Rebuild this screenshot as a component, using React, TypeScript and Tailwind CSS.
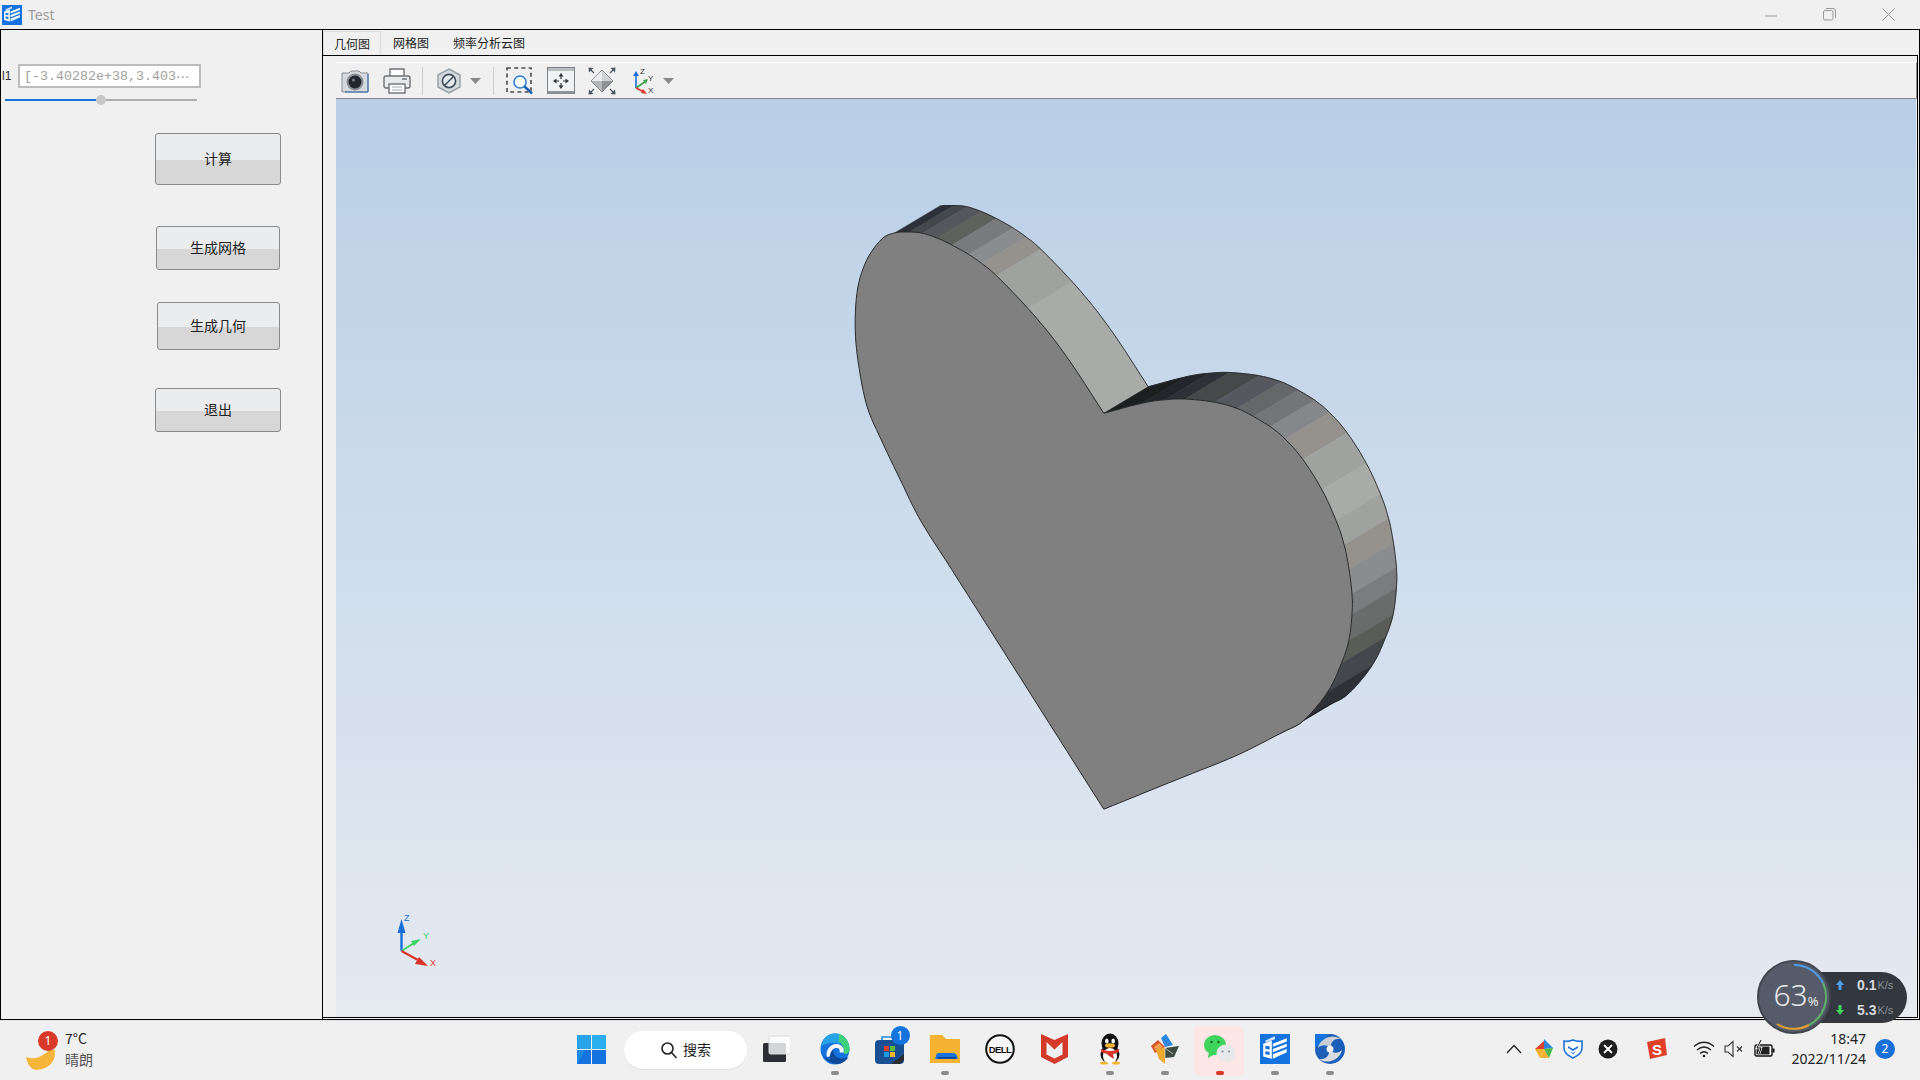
import React from "react";

type P = [number, number];

// heart outline, read off the reference (zoomed crop coords, mapped to page coords below)
const toPage = (p: P): P => [830 + p[0] / 2.703, 190 + p[1] / 2.45];
const OFFSET: P = [44.4, -26.5];

const LEFT_LOBE: P[] = [
  [740, 1517], [616, 1340], [469, 1130], [329, 930], [245, 810], [190, 710], [140, 615], [100, 530],
  [76, 420], [68, 330], [75, 240], [100, 170], [140, 120], [175, 105], [215, 103], [250, 106], [290, 118],
  [330, 135], [375, 158], [410, 180], [450, 210], [535, 290], [600, 360], [660, 435], [740, 547],
];
const LEFT_COLORS: Record<number, string> = {
  13: "#2c3038", 14: "#44484c", 15: "#55575c", 16: "#5f615d", 17: "#787a7c", 18: "#8a8c8e",
  19: "#95928e", 20: "#a0a2a0", 21: "#a9aba9", 22: "#a9aba9", 23: "#a9aba9",
};
const RIGHT_LOBE: P[] = [
  [740, 547], [845, 522], [905, 514], [960, 512], [1040, 520], [1100, 535], [1145, 555], [1190, 580],
  [1230, 610], [1278, 660], [1330, 735], [1368, 810], [1390, 870], [1403, 930], [1411, 990], [1411, 1040],
  [1402, 1105], [1382, 1160], [1345, 1230], [1280, 1300], [1220, 1330], [1100, 1385], [950, 1440], [740, 1517],
];
const RIGHT_COLORS = [
  "#1c1f20", "#22262a", "#2e3138", "#45494a", "#565860", "#666768", "#737577", "#85878a", "#95928e", "#a0a2a0",
  "#a9aba9", "#a0a2a0", "#95928e", "#8a8c8e", "#7a7c7e", "#6a6c6c", "#5a5c58", "#44484c", "#2e3138", "#1c1f20",
];

// catmull-rom, one list of samples per key segment
const sampleSegments = (keys: P[], n = 6): P[][] => {
  const pts = keys.map(toPage);
  const segs: P[][] = [];
  for (let i = 0; i < pts.length - 1; i++) {
    const a = pts[Math.max(i - 1, 0)];
    const b = pts[i];
    const c = pts[i + 1];
    const d = pts[Math.min(i + 2, pts.length - 1)];
    const seg: P[] = [];
    for (let k = 0; k <= n; k++) {
      const t = k / n;
      const f = (j: 0 | 1) =>
        0.5 *
        (2 * b[j] +
          (c[j] - a[j]) * t +
          (2 * a[j] - 5 * b[j] + 4 * c[j] - d[j]) * t * t +
          (3 * b[j] - a[j] - 3 * c[j] + d[j]) * t * t * t);
      seg.push([f(0), f(1)]);
    }
    segs.push(seg);
  }
  return segs;
};

const str = (pts: P[]) => pts.map((p) => `${p[0].toFixed(1)},${p[1].toFixed(1)}`).join(" ");
const shift = (pts: P[]): P[] => pts.map((p) => [p[0] + OFFSET[0], p[1] + OFFSET[1]]);

const leftSegs = sampleSegments(LEFT_LOBE);
const rightSegs = sampleSegments(RIGHT_LOBE);

const Scene: React.FC = () => {
  const strips: { pts: P[]; color: string }[] = [];
  leftSegs.forEach((s, i) => {
    if (LEFT_COLORS[i]) strips.push({ pts: s, color: LEFT_COLORS[i] });
  });
  rightSegs.forEach((s, i) => {
    if (RIGHT_COLORS[i]) strips.push({ pts: s, color: RIGHT_COLORS[i] });
  });
  const face = [...leftSegs.flat(), ...rightSegs.flat()];
  const backLeft = leftSegs.slice(13).flat();
  const backRight = rightSegs.slice(0, 20).flat();

  return (
    <svg className="block w-full h-full" viewBox="336 99 1580 918">
      {strips.map((s, i) => (
        <polygon
          key={i}
          points={str([...s.pts, ...shift(s.pts).reverse()])}
          fill={s.color}
          stroke={s.color}
          strokeWidth="0.6"
        />
      ))}
      <polyline points={str(shift(backLeft))} fill="none" stroke="#26282a" strokeWidth="0.9" />
      <polyline points={str(shift(backRight))} fill="none" stroke="#26282a" strokeWidth="0.9" />
      <polygon points={str(face)} fill="#808080" stroke="#26282a" strokeWidth="1" />

      {/* axis triad */}
      <line x1="401.5" y1="951" x2="401.5" y2="925" stroke="#1a6fd8" strokeWidth="2.4" />
      <polygon points="401.5,919 405.5,933 397.5,933" fill="#1a6fd8" />
      <line x1="401.5" y1="951" x2="414" y2="943" stroke="#3ed46a" strokeWidth="2" />
      <polygon points="421,939 414,946 411,941" fill="#3ed46a" />
      <line x1="401.5" y1="951" x2="418" y2="960" stroke="#d9352a" strokeWidth="2" />
      <polygon points="428,966 415,964 419,957" fill="#d9352a" />
      <text x="404" y="921" fontSize="9" fill="#1a6fd8" fontFamily="Liberation Sans, sans-serif">Z</text>
      <text x="423" y="939" fontSize="9" fill="#3ed46a" fontFamily="Liberation Sans, sans-serif">Y</text>
      <text x="430" y="966" fontSize="9" fill="#d9352a" fontFamily="Liberation Sans, sans-serif">X</text>
    </svg>
  );
};

const AppLogo: React.FC<{ size: number }> = ({ size }) => (
  <svg width={size} height={size} viewBox="0 0 28 28">
    <rect width="28" height="28" fill="#1473de" />
    <path d="M3 9l8-3v17l-8-2zM5 11v3l4 .5v-3zM5 16v3l4 .5v-3z" fill="#fff" fillRule="evenodd" />
    <path d="M5 6l9-4v3l-9 3z" fill="#cfe2f8" />
    <path d="M12 9l13-5v3l-13 5zM12 14l13-5v3l-13 5zM12 19l13-5v3l-13 6z" fill="#fff" />
  </svg>
);

const Caret: React.FC = () => (
  <svg width="11" height="6" viewBox="0 0 11 6">
    <polygon points="0,0 11,0 5.5,6" fill="#8a8a8a" />
  </svg>
);

const CameraIcon = () => (
  <svg width="28" height="28" viewBox="0 0 28 28">
    <path d="M1 6h7l2-2h8l2 2h7v19H1z" fill="#d5d8dc" stroke="#8b8f94" />
    <path d="M27 7v18H4" fill="none" stroke="#2a66ad" strokeWidth="1" />
    <circle cx="14" cy="15" r="8.5" fill="#8c9096" />
    <circle cx="14" cy="15" r="6.5" fill="#23262c" />
    <circle cx="12.5" cy="13" r="1.6" fill="#6f7a88" />
  </svg>
);

const PrinterIcon = () => (
  <svg width="28" height="28" viewBox="0 0 28 28">
    <path d="M7 9V2h14v7" fill="#fff" stroke="#6d7074" strokeWidth="1.4" />
    <rect x="1" y="9" width="26" height="12" rx="2" fill="#e9eaec" stroke="#6d7074" strokeWidth="1.4" />
    <rect x="19" y="11" width="5" height="2" fill="#8f9296" />
    <rect x="6" y="17" width="16" height="9" fill="#fff" stroke="#6d7074" strokeWidth="1.4" />
    <path d="M9 20h10M9 23h10" stroke="#a3a6aa" strokeWidth="1.2" />
  </svg>
);

const HexIcon = () => (
  <svg width="24" height="26" viewBox="0 0 24 26">
    <polygon points="12,1 23,7 23,19 12,25 1,19 1,7" fill="#d4d9dc" stroke="#98a3aa" strokeWidth="1.5" />
    <circle cx="12" cy="13" r="6.6" fill="#e7eaec" stroke="#3f4f5e" strokeWidth="1.6" />
    <line x1="7.5" y1="17.5" x2="16.5" y2="8.5" stroke="#3f4f5e" strokeWidth="1.6" />
  </svg>
);

const ZoomBoxIcon = () => (
  <svg width="28" height="28" viewBox="0 0 28 28">
    <rect x="1" y="1" width="24" height="24" fill="none" stroke="#4a4d52" strokeWidth="1.6" strokeDasharray="4 3.2" />
    <circle cx="14" cy="15" r="6" fill="#fff" stroke="#2b7fd6" strokeWidth="1.6" />
    <line x1="18.5" y1="19.5" x2="26" y2="26.5" stroke="#1b5fae" strokeWidth="2.4" />
  </svg>
);

const FitIcon = () => (
  <svg width="28" height="28" viewBox="0 0 28 28">
    <rect x="0.5" y="0.5" width="27" height="26" fill="#f1f2f3" stroke="#7d8186" />
    <rect x="1" y="1" width="26" height="3" fill="#b9bec4" />
    <rect x="1" y="24" width="26" height="2.500" fill="#8f9499" />
    <path d="M14 9v3M14 16v3M9 14h3M16 14h3" stroke="#33373c" strokeWidth="1.2" />
    <path d="M14 6l2.500 3.500h-5zM14 22l2.500-3.500h-5zM6 14l3.500-2.500v5zM22 14l-3.500-2.500v5z" fill="#33373c" />
  </svg>
);

const DiamondIcon = () => (
  <svg width="28" height="28" viewBox="0 0 28 28">
    <polygon points="14,3 25,14 14,14" fill="#d2d3d4" />
    <polygon points="14,3 3,14 14,14" fill="#ececec" />
    <polygon points="3,14 14,14 14,25" fill="#b4b6b8" />
    <polygon points="14,14 25,14 14,25" fill="#8f9294" />
    <polygon points="14,3 25,14 14,25 3,14" fill="none" stroke="#77797c" strokeWidth="0.8" />
    <path d="M0.500 0.500l5 .5-4.500 4.500zM27.500 0.500l-5 .5 4.500 4.500zM0.500 27.500l5-.5-4.500-4.500zM27.500 27.500l-5-.5 4.500-4.500z" fill="#4a5560" />
    <path d="M3 3l3 3M25 3l-3 3M3 25l3-3M25 25l-3-3" stroke="#4a5560" strokeWidth="1.2" />
  </svg>
);

const AxesIcon = () => (
  <svg width="26" height="28" viewBox="0 0 26 28">
    <line x1="5" y1="21" x2="5" y2="7" stroke="#1a6fd8" strokeWidth="1.6" />
    <polygon points="5,4 8,9 2,9" fill="#1a6fd8" />
    <line x1="5" y1="21" x2="15" y2="14" stroke="#3fa34d" strokeWidth="1.6" />
    <polygon points="17,12 15,17 12,13" fill="#3fa34d" />
    <line x1="5" y1="21" x2="13" y2="25" stroke="#d9352a" strokeWidth="1.6" />
    <polygon points="16,27 10,26 12,22" fill="#d9352a" />
    <text x="9" y="7" fontSize="8" fill="#333" fontFamily="Liberation Sans, sans-serif">Z</text>
    <text x="17" y="14" fontSize="8" fill="#333" fontFamily="Liberation Sans, sans-serif">Y</text>
    <text x="17" y="26" fontSize="8" fill="#333" fontFamily="Liberation Sans, sans-serif">X</text>
  </svg>
);

const WinIcon = () => (
  <svg width="29" height="29" viewBox="0 0 29 29">
    <rect x="0" y="0" width="14" height="14" fill="#29a3ea" />
    <rect x="15" y="0" width="14" height="14" fill="#2aaeef" />
    <polygon points="0,15 14,15 14,29 0,29" fill="#1d8ce0" />
    <polygon points="0,29 8,15 14,15 14,29" fill="#1473de" />
    <rect x="15" y="15" width="14" height="14" fill="#1473de" />
  </svg>
);

const TaskViewIcon = () => (
  <svg width="30" height="30" viewBox="0 0 30 30">
    <rect x="2" y="9" width="23" height="19" rx="1.5" fill="#2c2e33" />
    <rect x="8" y="2" width="22" height="18" rx="1.5" fill="#fff" fillOpacity="0.8" stroke="#dcdcdc" />
  </svg>
);

const EdgeIcon = () => (
  <svg width="30" height="32" viewBox="0 0 30 32">
    <ellipse cx="15" cy="16" rx="14.5" ry="15.5" fill="#1473de" />
    <path d="M1 13C3 5 8 .5 15 .5c3 0 5 .7 7 2l-2 9c-5-3-12-2-19 1.500z" fill="#28a2e6" />
    <path d="M19 1c6 1.500 10.500 8 10.500 15 0 3-1.500 5-5 5l-1-1c1-5-1-9-5-11.500z" fill="#3fd07a" />
    <path d="M7 24c-2-6 3-13 9-13 6 0 9 5 7.500 8.500h-4c1-3-1-5-4-4.500-4 1-5 5-4 8z" fill="#f4f6f8" />
    <path d="M4 24c3 4 8 7 13 7 5 0 9-3 11.500-7-3 1.500-7 2-10.500.5-2.500-1-5-4-5-8-2 2-4 6-3 10z" fill="#0f4a9a" />
  </svg>
);

const StoreIcon = () => (
  <svg width="30" height="30" viewBox="0 0 30 30">
    <path d="M7 7V3h12v4" fill="none" stroke="#2a8bdf" strokeWidth="1.6" />
    <rect x="0" y="6" width="29" height="24" rx="4" fill="#174f90" />
    <polygon points="29,20 29,26 25,30 16,30" fill="#2b2d33" />
    <rect x="9" y="12" width="5" height="5" fill="#e5432f" />
    <rect x="15" y="12" width="5" height="5" fill="#5ebd3e" />
    <rect x="9" y="18" width="5" height="5" fill="#1a9be0" />
    <rect x="15" y="18" width="5" height="5" fill="#f6b52b" />
  </svg>
);

const FolderIcon = () => (
  <svg width="30" height="28" viewBox="0 0 30 28">
    <path d="M0 0h12l4 4h14v24H0z" fill="#f6b331" />
    <path d="M6 21q0-3 3-3h14q3 0 4 3l1 3H5z" fill="#1473de" />
    <rect x="8" y="22" width="18" height="1.6" fill="#0f3f8f" />
  </svg>
);

const DellIcon = () => (
  <svg width="30" height="30" viewBox="0 0 30 30">
    <circle cx="15" cy="15" r="13.8" fill="#f7f7f7" stroke="#111" strokeWidth="2" />
    <text
      x="15"
      y="18.5"
      textAnchor="middle"
      fontSize="9.5"
      fontWeight="700"
      fill="#111"
      letterSpacing="-0.6"
      fontFamily="Liberation Sans, sans-serif"
    >
      DELL
    </text>
  </svg>
);

const McAfeeIcon = () => (
  <svg width="27" height="30" viewBox="0 0 27 30">
    <path
      d="M0 0l13.5 6L27 0v23l-13.5 7L0 23zM5.5 8v12.5l8 4 8-4V8l-8 7.5z"
      fill="#d43a2a"
      fillRule="evenodd"
    />
  </svg>
);

const QQIcon = () => (
  <svg width="26" height="32" viewBox="0 0 26 32">
    <ellipse cx="13" cy="10.5" rx="8.5" ry="10" fill="#111" />
    <ellipse cx="13" cy="21" rx="9.5" ry="9.5" fill="#111" />
    <ellipse cx="13" cy="23" rx="7" ry="8" fill="#fff" />
    <ellipse cx="9.8" cy="8" rx="1.8" ry="2.6" fill="#fff" />
    <ellipse cx="16.2" cy="8" rx="1.8" ry="2.6" fill="#fff" />
    <ellipse cx="13" cy="12.5" rx="5" ry="2.2" fill="#f6b331" />
    <path d="M4 16q9 4 18 0v3q-4 2-6 2l1 5-5-3-2-2q-4-1-6-2z" fill="#d9352a" />
    <ellipse cx="7" cy="30" rx="4" ry="1.6" fill="#f6b331" />
    <ellipse cx="19" cy="30" rx="4" ry="1.6" fill="#f6b331" />
  </svg>
);

const PinIcon = () => (
  <svg width="30" height="30" viewBox="0 0 30 30">
    <polygon points="11,4 16,0 23,11 15,13" fill="#2b86dc" />
    <polygon points="1,12 8,6 15,13 5,19" fill="#d9522a" />
    <polygon points="4,13 9,9 13,13 6,17" fill="#f0a04a" />
    <polygon points="6,15 15,14 15,30 9,25" fill="#f0a92c" />
    <polygon points="15,14 29,12 24,23 15,24" fill="#3d4a40" />
    <path d="M15 13v11M15 14l8 6" stroke="#cfd6cf" strokeWidth="0.8" />
  </svg>
);

const WeChatIcon = () => (
  <svg width="32" height="30" viewBox="0 0 32 30">
    <ellipse cx="11" cy="11" rx="11" ry="10" fill="#3ed45e" />
    <polygon points="5,18 4,24 11,20" fill="#3ed45e" />
    <circle cx="7.5" cy="8" r="1.2" fill="#14691f" />
    <circle cx="14.5" cy="8" r="1.2" fill="#14691f" />
    <ellipse cx="22" cy="19" rx="9.5" ry="8.5" fill="#e6e8ea" />
    <polygon points="25,25 28,29 20,27" fill="#e6e8ea" />
    <circle cx="18.5" cy="17.5" r="1.1" fill="#8b8f93" />
    <circle cx="25" cy="17.5" r="1.1" fill="#8b8f93" />
  </svg>
);

const SwirlIcon = () => (
  <svg width="30" height="30" viewBox="0 0 30 30">
    <circle cx="15" cy="15" r="15" fill="#1d5fb8" />
    <rect x="0" y="0" width="12" height="12" fill="#1473de" />
    <path d="M3 14C5 4 18 -1 26 5c-6-1-11 3-10 9-5-4-10-3-13 0z" fill="#c9ced4" />
    <path d="M27 16c-2 10-15 15-23 9 6 1 11-3 10-9 5 4 10 3 13 0z" fill="#d7dade" />
    <circle cx="15" cy="15" r="3.5" fill="#eef0f2" />
  </svg>
);

const TrayPinwheel = () => (
  <svg width="20" height="20" viewBox="0 0 20 20">
    <polygon points="10,0 19,9 10,10" fill="#2b86dc" />
    <polygon points="10,10 19,9 15,19" fill="#4cb84c" />
    <polygon points="10,10 15,19 6,19" fill="#f6b331" />
    <polygon points="10,10 6,19 1,10" fill="#f6b331" />
    <polygon points="1,10 10,2 10,10" fill="#d9422a" />
  </svg>
);

const TrayShield = () => (
  <svg width="20" height="20" viewBox="0 0 20 20">
    <path d="M10 1q5 2 9 1v7q0 6-9 10Q1 15 1 9V2q4 1 9-1z" fill="#fff" stroke="#1d73dc" strokeWidth="1.6" />
    <path d="M5 7l5 3 5-3v2l-5 3-5-3zM7 12l3 2 3-2-3 3.5z" fill="#1d73dc" />
  </svg>
);

const TrayClose = () => (
  <svg width="20" height="20" viewBox="0 0 20 20">
    <circle cx="10" cy="10" r="9.5" fill="#1e1e1e" />
    <path d="M6.6 6.6l6.8 6.8M13.4 6.6l-6.8 6.8" stroke="#fff" strokeWidth="2" strokeLinecap="round" />
  </svg>
);

const TraySogou = () => (
  <svg width="22" height="22" viewBox="0 0 22 22">
    <polygon points="1,4 19,0 21,17 4,21" fill="#e0402a" />
    <text
      x="11"
      y="16.5"
      textAnchor="middle"
      fontSize="15"
      fontWeight="700"
      fill="#fff"
      fontFamily="Liberation Sans, sans-serif"
    >
      S
    </text>
  </svg>
);

const TrayWifi = () => (
  <svg width="22" height="18" viewBox="0 0 22 18" fill="none" stroke="#222" strokeWidth="1.3">
    <path d="M1 6.5q10-8.5 20 0M4 10q7-6 14 0M7 13.5q4-3.5 8 0" />
    <circle cx="11" cy="16" r="1.3" fill="#222" stroke="none" />
  </svg>
);

const TrayMute = () => (
  <svg width="20" height="18" viewBox="0 0 20 18" fill="none" stroke="#333" strokeWidth="1.1">
    <path d="M1 6h3l5-4.500v15L4 12H1z" />
    <path d="M13 6.500l5 5M18 6.500l-5 5" />
  </svg>
);

const TrayBattery = () => (
  <svg width="21" height="18" viewBox="0 0 21 18">
    <rect x="1" y="5" width="17" height="11" rx="1.5" fill="#fff" stroke="#111" strokeWidth="1.4" />
    <rect x="18.500" y="8.500" width="2" height="4" fill="#111" />
    <rect x="2.500" y="6.500" width="13" height="8" fill="#222" />
    <path d="M7 0L3 8h4l-2 6" fill="none" stroke="#f0f0f0" strokeWidth="2.4" />
    <path d="M7 0L3 8h4l-2 6" fill="none" stroke="#111" strokeWidth="1" />
  </svg>
);

const buttonClass =
  "rounded-[3px] border border-[#8a8a8a] pb-[2px] bg-linear-to-b from-[#ebecee] from-[52%] to-[#d7d7d7] to-[52%] text-[14px] text-[#222]";

const TaskCell: React.FC<{ dot?: "grey" | "red"; highlight?: boolean; children: React.ReactNode }> = ({
  dot,
  highlight,
  children,
}) => (
  <div className="relative w-[55px] h-[60px] pb-[3px] flex items-center justify-center">
    {highlight && <div className="absolute left-[2px] top-[5px] w-[50px] h-[50px] rounded-md bg-[#fde6e6]" />}
    <div className="relative flex items-center justify-center">{children}</div>
    {dot && (
      <div
        className={`absolute left-[23.5px] top-[50px] w-[8px] h-[4px] rounded-full ${
          dot === "red" ? "bg-[#d9352a]" : "bg-[#8c8c8c]"
        }`}
      />
    )}
  </div>
);

const App: React.FC = () => {
  return (
    <div className="relative w-[1920px] h-[1080px] overflow-hidden flex flex-col bg-[#f0f0f0] font-['Noto_Sans_CJK_SC','Noto_Sans',sans-serif]">
      {/* Title bar */}
      <div className="h-[29px] shrink-0 flex items-center pl-[2px]">
        <AppLogo size={20} />
        <span className="ml-[6px] text-[14px] text-[#9a9a9a] font-['Noto_Sans',sans-serif]">Test</span>
        <div className="ml-auto flex items-center h-full">
          <svg width="12" height="12" viewBox="0 0 12 12" className="mr-[46px]">
            <line x1="0" y1="7" x2="12" y2="7" stroke="#999" />
          </svg>
          <svg width="13" height="13" viewBox="0 0 13 13" className="mr-[46px]" fill="none" stroke="#999">
            <rect x="0.5" y="2.5" width="9.5" height="9.5" rx="1.5" />
            <path d="M3 .5h7a2.5 2.5 0 0 1 2.5 2.5v7" />
          </svg>
          <svg width="13" height="13" viewBox="0 0 13 13" className="mr-[25px]" stroke="#999">
            <path d="M.5.5l12 12M12.5.5l-12 12" />
          </svg>
        </div>
      </div>

      {/* Window body */}
      <div className="h-[991px] shrink-0 flex border-t border-r border-b border-l border-black">
        {/* Left panel */}
        <div className="w-[322px] shrink-0 border-r border-black relative">
          <div className="flex items-center h-[24px] mt-[34px] pl-[1px]">
            <span className="w-[16px] text-[12px] text-[#333] font-['Liberation_Sans',sans-serif]">l1</span>
            <div className="w-[183px] h-[24px] bg-white border-2 border-[#bcbcbc] pl-[4px] pt-[2px] flex items-center text-[13.33px] text-[#a0a0a0] font-['Liberation_Mono',monospace] whitespace-nowrap overflow-hidden">
              [-3.40282e+38,3.403<span className="font-['Noto_Sans_CJK_SC',sans-serif]">⋯</span>
            </div>
          </div>
          <div className="relative ml-[4px] mt-[7px] w-[192px] h-[10px] flex items-center">
            <div className="w-[91px] h-[2px] bg-[#1a73d8]" />
            <div className="flex-1 h-[2px] bg-[#adadad]" />
            <div className="absolute left-[91px] top-0 w-[10px] h-[10px] rounded-full bg-[#c8c8c8]" />
          </div>
          <div className="flex flex-col items-center ml-[113px] w-[208px]">
            <button className={`${buttonClass} mt-[28px] w-[126px] h-[52px]`}>计算</button>
            <button className={`${buttonClass} mt-[41px] w-[124px] h-[44px]`}>生成网格</button>
            <button className={`${buttonClass} mt-[32px] w-[123px] h-[48px]`}>生成几何</button>
            <button className={`${buttonClass} mt-[38px] w-[126px] h-[44px]`}>退出</button>
          </div>
        </div>

        {/* Tabs + viewer */}
        <div className="flex-1 min-w-0 flex flex-col">
          <div className="h-[25px] shrink-0 flex items-end text-[12px] text-[#222]">
            <div className="w-[58px] h-[24px] bg-[#f0f0f0] border border-b-0 border-[#dcdcdc] flex items-center justify-center">
              几何图
            </div>
            <div className="w-[60px] h-[24px] flex items-center justify-center">网格图</div>
            <div className="w-[96px] h-[24px] flex items-center justify-center">频率分析云图</div>
          </div>
          <div className="flex-1 min-h-0 flex flex-col border-t border-r border-b border-black mr-[1px] mb-[1px] pt-[6px] pl-[13px]">
            <div className="h-[37px] shrink-0 flex items-center border-t border-t-white border-b border-b-[#8a8a8a] border-r border-r-[#8a8a8a] pl-[5px]">
              <CameraIcon />
              <div className="ml-[14px]">
                <PrinterIcon />
              </div>
              <div className="ml-[11px] w-px h-[28px] bg-[#cfcfcf]" />
              <div className="ml-[14px]">
                <HexIcon />
              </div>
              <div className="ml-[9px]">
                <Caret />
              </div>
              <div className="ml-[12px] w-px h-[28px] bg-[#cfcfcf]" />
              <div className="ml-[12px]">
                <ZoomBoxIcon />
              </div>
              <div className="ml-[13px]">
                <FitIcon />
              </div>
              <div className="ml-[13px]">
                <DiamondIcon />
              </div>
              <div className="ml-[15px]">
                <AxesIcon />
              </div>
              <div className="ml-[6px]">
                <Caret />
              </div>
            </div>
            <div className="flex-1 min-h-0 mr-[1px] bg-linear-to-b from-[#b9cfe6] to-[#e5eaf1]">
              <Scene />
            </div>
          </div>
        </div>
      </div>

      {/* Taskbar */}
      <div className="h-[60px] shrink-0 flex items-center bg-[#f0f0f0] border-t border-[#e2e2e2]">
        <div className="w-[564px] shrink-0 pl-[26px] pb-[3px] flex items-center">
          <div className="relative w-[39px] h-[48px]">
            <svg width="30" height="20" viewBox="0 0 30 20" className="absolute left-0 top-[25px]">
              <path d="M0 7q9 3 15-1 6-3 8-6h6q1 12-8 17-5 3-11 3Q2 19 0 7z" fill="#f5b53a" />
            </svg>
            <div className="absolute left-[12px] top-[6px] w-[20px] h-[20px] rounded-full bg-[#d8392b] text-white text-[12px] leading-[20px] text-center font-['Noto_Sans',sans-serif]">
              1
            </div>
          </div>
          <div className="flex flex-col text-[14px] leading-[21px]">
            <span className="text-[#222]">7°C</span>
            <span className="text-[#555]">晴朗</span>
          </div>
        </div>
        <TaskCell>
          <WinIcon />
        </TaskCell>
        <div className="ml-[5px] mb-[2px] w-[123px] h-[38px] rounded-full bg-white shadow-[0_1px_1px_rgba(0,0,0,0.08)] flex items-center justify-center text-[14px] text-[#222]">
          <svg width="18" height="18" viewBox="0 0 18 18" className="mr-[5px]" fill="none" stroke="#222" strokeWidth="1.6">
            <circle cx="7.5" cy="7.5" r="5.5" />
            <path d="M11.5 11.5l5 5.5" />
          </svg>
          搜索
        </div>
        <div className="ml-[1px]">
          <TaskCell>
            <TaskViewIcon />
          </TaskCell>
        </div>
        <div className="ml-[4px]">
          <TaskCell dot="grey">
            <EdgeIcon />
          </TaskCell>
        </div>
        <TaskCell>
          <div className="relative">
            <StoreIcon />
            <div className="absolute left-[16px] -top-[8px] w-[19px] h-[19px] rounded-full bg-[#1473de] text-white text-[12px] leading-[19px] text-center font-['Noto_Sans',sans-serif]">
              1
            </div>
          </div>
        </TaskCell>
        <TaskCell dot="grey">
          <FolderIcon />
        </TaskCell>
        <TaskCell>
          <DellIcon />
        </TaskCell>
        <TaskCell>
          <McAfeeIcon />
        </TaskCell>
        <TaskCell dot="grey">
          <QQIcon />
        </TaskCell>
        <TaskCell dot="grey">
          <PinIcon />
        </TaskCell>
        <TaskCell dot="red" highlight>
          <WeChatIcon />
        </TaskCell>
        <TaskCell dot="grey">
          <AppLogo size={30} />
        </TaskCell>
        <TaskCell dot="grey">
          <SwirlIcon />
        </TaskCell>

        {/* Tray */}
        <div className="ml-[143px] pb-[3px] flex items-center">
          <div className="w-[28px] flex justify-center">
            <svg width="16" height="10" viewBox="0 0 16 10" fill="none" stroke="#222" strokeWidth="1.3">
              <path d="M1 9l7-7.5L15 9" />
            </svg>
          </div>
          <div className="ml-[2px] w-[28px] flex justify-center">
            <TrayPinwheel />
          </div>
          <div className="ml-[1px] w-[28px] flex justify-center">
            <TrayShield />
          </div>
          <div className="ml-[7px] w-[28px] flex justify-center">
            <TrayClose />
          </div>
          <div className="ml-[21px] w-[28px] flex justify-center">
            <TraySogou />
          </div>
          <div className="ml-[19px] w-[28px] flex justify-center">
            <TrayWifi />
          </div>
          <div className="ml-[2px] w-[28px] flex justify-center">
            <TrayMute />
          </div>
          <div className="ml-[2px] w-[28px] flex justify-center">
            <TrayBattery />
          </div>
          <div className="w-[88px] flex flex-col items-end text-[14px] leading-[20px] text-[#222] font-['Noto_Sans',sans-serif]">
            <span>18:47</span>
            <span>2022/11/24</span>
          </div>
          <div className="ml-[9px] w-[20px] h-[20px] rounded-full bg-[#1a6fd8] text-white text-[12px] leading-[20px] text-center font-['Noto_Sans',sans-serif]">
            2
          </div>
        </div>
      </div>

      {/* Speed widget floats over window and taskbar */}
      <div className="absolute left-[1816px] top-[972px] w-[91px] h-[51px] rounded-r-full bg-[#33373f] font-['Liberation_Sans',sans-serif]">
        <div className="flex items-center h-[26px] pl-[20px] text-[14px] font-bold text-[#d5d7da]">
          <svg width="21" height="10" viewBox="0 0 21 10" className="shrink-0">
            <path d="M4 0l4 5H5.500v5h-3V5H0z" fill="#4f9be8" />
          </svg>
          0.1<span className="ml-[1px] text-[11px] font-normal text-[#8b8f96]">K/s</span>
        </div>
        <div className="flex items-center h-[24px] pl-[20px] text-[14px] font-bold text-[#d5d7da]">
          <svg width="21" height="10" viewBox="0 0 21 10" className="shrink-0">
            <path d="M4 10L0 5h2.500V0h3v5H8z" fill="#3ed45e" />
          </svg>
          5.3<span className="ml-[1px] text-[11px] font-normal text-[#8b8f96]">K/s</span>
        </div>
      </div>
      <div className="absolute left-[1757px] top-[960px] w-[74px] h-[74px] rounded-full bg-[#555b68] border-2 border-[#41464f] flex items-center justify-center font-['Noto_Sans',sans-serif] text-[#e8e9eb]">
        <svg width="74" height="74" viewBox="0 0 74 74" className="absolute -left-[2px] -top-[2px]" fill="none" strokeWidth="2">
          <path d="M37 5a32 32 0 0 1 29 18" stroke="#4f9be8" />
          <path d="M66 23a32 32 0 0 1-14 42" stroke="#5fae6a" />
          <path d="M52 65a32 32 0 0 1-32-1" stroke="#e0a030" />
        </svg>
        <div className="flex items-baseline ml-[4px] mb-[4px]">
          <span className="text-[30px] font-light leading-none">63</span>
          <span className="text-[13px] leading-none">%</span>
        </div>
      </div>
    </div>
  );
};

export default App;
